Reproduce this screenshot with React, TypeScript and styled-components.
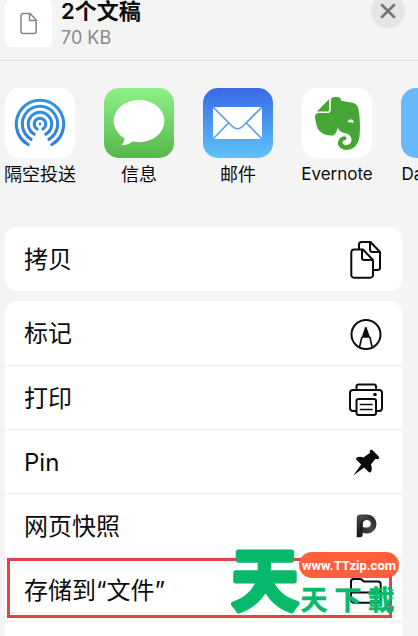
import React from "react";
import styled, { createGlobalStyle, css } from "styled-components";
import { SiEvernote } from "react-icons/si";

const GlobalStyle = createGlobalStyle`
  * { box-sizing: border-box; }
  body {
    margin: 0;
    background: #f4f4f4;
    color: #0c0c0c;
    font-family: Inter, "Noto Sans CJK SC", sans-serif;
  }
  button { font: inherit; color: inherit; border: 0; padding: 0; background: none; cursor: pointer; }
`;

const Sheet = styled.main`
  height: 100vh;
  overflow: hidden;
`;

const Header = styled.header`
  display: flex;
  align-items: flex-start;
  height: 61px;
  padding: 0 13px 0 5px;
  border-bottom: 1px solid #dcdcdc;
`;

const Thumb = styled.div`
  display: grid;
  place-items: center;
  width: 47px;
  height: 47px;
  border-radius: 6px;
  background: #fff;
  color: #858585;
`;

const Info = styled.div`
  flex: 1;
  margin-left: 9px;
`;

const Title = styled.h1`
  margin: 0;
  font-size: 22px;
  line-height: 22px;
  font-weight: 600;
`;

const Size = styled.p`
  margin: 0;
  font-size: 18px;
  line-height: 32px;
  color: #8a8a8c;
`;

const Close = styled.button`
  display: grid;
  place-items: center;
  width: 34px;
  height: 34px;
  margin-top: -6px;
  border-radius: 50%;
  background: #e5e5e6;
`;

const Apps = styled.nav`
  display: flex;
  gap: 29px;
  padding: 27px 0 0 5px;
  height: 166px;
  overflow: hidden;
`;

const AppButton = styled.button`
  flex: none;
  display: flex;
  flex-direction: column;
  align-items: center;
  width: 70px;
  height: 104px;
`;

const Tile = styled.span<{ $fill: string }>`
  flex: none;
  display: grid;
  place-items: center;
  width: 70px;
  height: 70px;
  border-radius: 15px;
  background: ${(p) => p.$fill};
  color: #46a635;
`;

const AppName = styled.span<{ $latin: boolean }>`
  font-size: ${(p) => (p.$latin ? 17 : 18)}px;
  line-height: ${(p) => (p.$latin ? 32 : 34)}px;
  white-space: nowrap;
`;

const Groups = styled.div`
  display: grid;
  gap: 10px;
  padding: 0 16px 0 5px;
`;

const Card = styled.section`
  border-radius: 12px;
  background: #fff;
`;

const RowBox = styled.div`
  position: relative;
  height: 64px;
  & + & { border-top: 1px solid #efefef; }
`;

const Row = styled.button`
  display: flex;
  align-items: center;
  justify-content: space-between;
  width: 100%;
  height: 100%;
  padding: 2px 16px 0 19px;
  font-size: 24px;
  line-height: 32px;
  text-align: left;
`;

const Highlight = styled.div`
  position: absolute;
  inset: 0 10px 3px 2px;
  border: 3px solid #e24446;
  pointer-events: none;
`;

const Watermark = styled.svg`
  position: absolute;
  top: -12px;
  right: 0;
  overflow: visible;
  pointer-events: none;
  font-family: "Noto Sans CJK SC", sans-serif;
  text-anchor: middle;
  stroke-linejoin: round;
`;

const Stroke = styled.svg<{ $thin?: boolean }>`
  flex: none;
  fill: none;
  stroke: currentColor;
  stroke-linecap: round;
  stroke-linejoin: round;
  ${(p) => (p.$thin ? css`stroke-width: 1.5;` : css`stroke-width: 2;`)}
`;

function arc(r: number) {
  const dx = r * 0.5;
  const dy = r * 0.866;
  return `M${35 - dx} ${36 + dy}A${r} ${r} 0 1 1 ${35 + dx} ${36 + dy}`;
}

const AirDropArt = () => (
  <svg width="70" height="70" viewBox="0 0 70 70" fill="none" stroke="url(#air)" strokeWidth="3.1" strokeLinecap="round">
    <defs>
      <linearGradient id="air" gradientUnits="userSpaceOnUse" x1="0" y1="10" x2="0" y2="60">
        <stop stopColor="#2c97e2" />
        <stop offset="1" stopColor="#347bdc" />
      </linearGradient>
    </defs>
    {[23.7, 17.7, 11.7, 5.8].map((r) => <path key={r} d={arc(r)} />)}
    <circle cx="35" cy="36" r="1.4" fill="#2f86df" stroke="none" />
  </svg>
);

const MessageArt = () => (
  <svg width="70" height="70" viewBox="0 0 70 70" fill="#fff">
    <ellipse cx="35" cy="33" rx="25.4" ry="21.2" />
    <path d="M20 47c1.500 4-.500 8-2.500 10.300 5 .2 9-2 12-4.800z" />
  </svg>
);

const MailArt = () => (
  <svg width="70" height="70" viewBox="0 0 70 70" fill="none" stroke="#559bed" strokeWidth="1.6">
    <rect x="10" y="19" width="49" height="32" rx="2" fill="#fff" stroke="none" />
    <path d="M10.500 19.500 29.500 38.500q5 4.500 10 0L58.500 19.500M10.500 50.500 25.500 35M58.500 50.500 43.500 35" />
  </svg>
);

const FileIcon = () => (
  <Stroke $thin width="19" height="23" viewBox="0 0 19 23">
    <path d="M4 1.500h7L17.200 8v11.500a2 2 0 0 1-2 2H4a2 2 0 0 1-2-2v-16a2 2 0 0 1 2-2zM10.500 1.500V8.500h6.500" />
  </Stroke>
);

const CopyIcon = () => (
  <Stroke width="40" height="40" viewBox="0 0 40 40">
    <path d="M13 9V4.500A2.500 2.500 0 0 1 15.500 2h9L34 12v15.500a2.500 2.500 0 0 1-2.500 2.500H28M24 2v7.500a2.500 2.500 0 0 0 2.500 2.500H34" />
    <path d="M8 9.500h9L27 20v15a2.700 2.700 0 0 1-2.700 2.700H8A2.700 2.700 0 0 1 5.300 35V12.200A2.700 2.700 0 0 1 8 9.500zM16 10v7.800A2.200 2.200 0 0 0 18.200 20H27" />
  </Stroke>
);

const MarkupIcon = () => (
  <Stroke width="40" height="40" viewBox="0 0 40 40">
    <circle cx="20" cy="20.500" r="14.500" />
    <path d="M15.800 23.500 13.500 33M24 23.500 26 33" strokeWidth="1.6" />
    <path d="M15.500 23.700 19 13.500q.8-1.500 1.600 0L24.300 23.700z" fill="currentColor" stroke="none" />
  </Stroke>
);

const PrinterIcon = () => (
  <Stroke width="40" height="40" viewBox="0 0 40 40">
    <path d="M10.500 11V7.500a2 2 0 0 1 2-2h15.500a2 2 0 0 1 2 2V11" />
    <path d="M10 32H7a3 3 0 0 1-3-3V14a3 3 0 0 1 3-3h26a3 3 0 0 1 3 3v15a3 3 0 0 1-3 3h-3" />
    <rect x="10.500" y="20" width="19.500" height="16" rx="2" />
    <path d="M14.500 25.500h11.500M14.500 30.500h11.500" strokeWidth="1.7" />
    <circle cx="29" cy="15.500" r="1.800" fill="currentColor" stroke="none" />
  </Stroke>
);

const PinIcon = () => (
  <svg width="40" height="40" viewBox="0 0 40 40" fill="currentColor">
    <path d="M24 7.600c.5-1 1.700-1.200 2.600-.4l6.100 6.200c.9 1 .6 2.300-.6 2.600-1 .3-1.800 0-2.600-.2l-4.600 5.600c.9 2.300 1.600 4.900.1 7.300-.6.900-1.500.9-2.300.2l-4.600-4.500L7.300 32.600 15.200 21.600 10.600 17c-.8-.8-.7-1.800.2-2.400 2.300-1.300 4.600-.9 6.700-.1l6.500-4.700c-.3-.8-.4-1.500 0-2.200z" />
  </svg>
);

const SnapshotIcon = () => (
  <svg width="40" height="40" viewBox="0 0 40 40">
    <defs>
      <linearGradient id="snap" x1="0" y1="1" x2="1" y2="0">
        <stop stopColor="#0d0d0d" />
        <stop offset=".55" stopColor="#4a4a4a" />
        <stop offset="1" stopColor="#1b1b1b" />
      </linearGradient>
    </defs>
    <path fill="url(#snap)" fillRule="evenodd" d="M14.500 7.500H21a9.500 9.500 0 0 1 0 19c-1.700 0-3-.3-4.200-.9v1.700a3 3 0 0 1-3 3h-3V11.200a3.700 3.700 0 0 1 3.700-3.700zM20.500 13c-2.400 0-3.700 1.600-3.700 4v3c1 .4 2.200.6 3.700.6 2.700 0 4.300-1.500 4.300-3.800S23.200 13 20.500 13z" />
    <path d="M16.800 17c0-2.400 1.300-4 3.700-4-3.500-1.500-6.500.5-6.500 5v7.500l2.800-2z" fill="#111" opacity=".6" />
  </svg>
);

const FolderIcon = () => (
  <Stroke width="40" height="40" viewBox="0 0 40 40">
    <path d="M5 29V10.500A2.500 2.500 0 0 1 7.500 8h6.300c1 0 1.700.4 2.400 1l1.600 1.500H32a2.700 2.700 0 0 1 2.700 2.700V29a2.700 2.700 0 0 1-2.700 2.700H7.700A2.700 2.700 0 0 1 5 29zM5 21.500h29.500" />
  </Stroke>
);

const SiteMark = () => (
  <Watermark width="173" height="72" viewBox="0 0 173 72">
    <g fill="#07b96b" stroke="#07b96b">
      <text x="36" y="59" fontSize="67" fontWeight="700" strokeWidth="5">天</text>
      <g fontSize="27" fontWeight="700" strokeWidth="0.5">
        <text x="85" y="64">天</text>
        <text x="119" y="64">下</text>
        <text x="152" y="64">載</text>
      </g>
    </g>
    <rect x="70" y="6" width="100" height="26" rx="13" fill="#ff5f3b" />
    <text x="120" y="24" fontFamily="Roboto, sans-serif" fontSize="13" fontWeight="700" fill="#fff">www.TTzip.com</text>
  </Watermark>
);

const apps = [
  { name: "隔空投送", fill: "#fff", art: <AirDropArt /> },
  { name: "信息", fill: "linear-gradient(#8df287, #55b747)", art: <MessageArt /> },
  { name: "邮件", fill: "linear-gradient(#3969e5, #5cc4f8)", art: <MailArt /> },
  { name: "Evernote", latin: true, fill: "#fff", art: <SiEvernote size={53} /> },
  { name: "Day One", latin: true, fill: "#69b9fa", art: null },
];

const actions = [
  { name: "标记", icon: <MarkupIcon /> },
  { name: "打印", icon: <PrinterIcon /> },
  { name: "Pin", icon: <PinIcon /> },
  { name: "网页快照", icon: <SnapshotIcon /> },
];

export default function App() {
  return (
    <Sheet>
      <GlobalStyle />
      <Header>
        <Thumb><FileIcon /></Thumb>
        <Info>
          <Title>2个文稿</Title>
          <Size>70 KB</Size>
        </Info>
        <Close aria-label="关闭">
          <svg width="16" height="16" viewBox="0 0 16 16" stroke="#77777a" strokeWidth="2.800" strokeLinecap="round">
            <path d="M2 2l12 12M14 2 2 14" />
          </svg>
        </Close>
      </Header>
      <Apps>
        {apps.map((a) => (
          <AppButton key={a.name}>
            <Tile $fill={a.fill}>{a.art}</Tile>
            <AppName $latin={!!a.latin}>{a.name}</AppName>
          </AppButton>
        ))}
      </Apps>
      <Groups>
        <Card>
          <RowBox><Row>拷贝<CopyIcon /></Row></RowBox>
        </Card>
        <Card>
          {actions.map((a) => (
            <RowBox key={a.name}><Row>{a.name}{a.icon}</Row></RowBox>
          ))}
          <RowBox>
            <Row>存储到“文件”<FolderIcon /></Row>
            <Highlight />
            <SiteMark />
          </RowBox>
          <RowBox />
        </Card>
      </Groups>
    </Sheet>
  );
}
